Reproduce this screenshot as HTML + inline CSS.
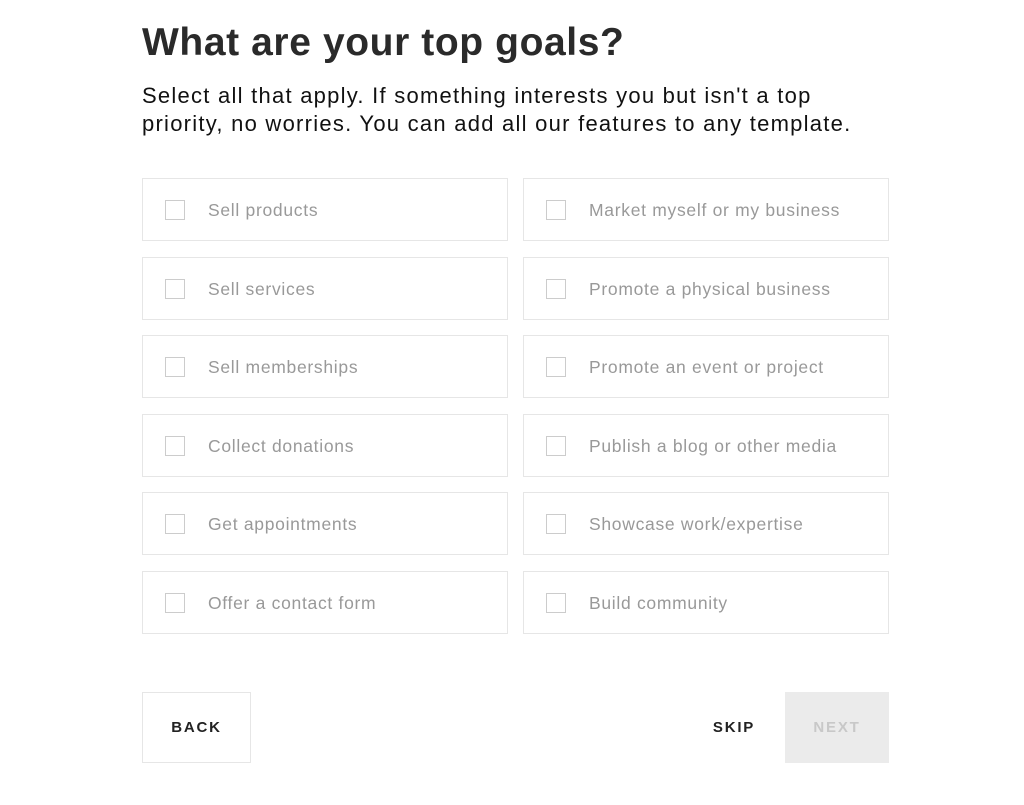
<!DOCTYPE html>
<html><head><meta charset="utf-8"><style>
body{margin:0;background:#fff;font-family:"Liberation Sans",sans-serif;width:1024px;height:805px;position:relative;overflow:hidden}
h1{position:absolute;left:142px;top:21px;margin:0;font-size:39px;font-weight:bold;color:#2a2a2a;letter-spacing:0.6px}
p{position:absolute;left:142px;top:82px;margin:0;font-size:22px;line-height:28px;color:#111;width:800px;letter-spacing:1.25px;white-space:nowrap}
.box{position:absolute;border:1px solid #e6e6e6;box-sizing:border-box;width:366px;height:63px}
.box i{position:absolute;left:22px;top:21px;width:20px;height:20px;border:1px solid #ccc;box-sizing:border-box}
.box span{position:absolute;left:65px;top:21px;font-size:17.5px;color:#999;letter-spacing:0.7px}
.btn{position:absolute;top:692px;height:71px;box-sizing:border-box;font-size:15px;font-weight:bold;letter-spacing:1.8px;display:flex;align-items:center;justify-content:center}
</style></head><body>
<h1>What are your top goals?</h1>
<p>Select all that apply. If something interests you but isn't a top<br>priority, no worries. You can add all our features to any template.</p>
<div class="box" style="left:142px;top:178px"><i></i><span>Sell products</span></div>
<div class="box" style="left:523px;top:178px"><i></i><span>Market myself or my business</span></div>
<div class="box" style="left:142px;top:257px"><i></i><span>Sell services</span></div>
<div class="box" style="left:523px;top:257px"><i></i><span>Promote a physical business</span></div>
<div class="box" style="left:142px;top:335px"><i></i><span>Sell memberships</span></div>
<div class="box" style="left:523px;top:335px"><i></i><span>Promote an event or project</span></div>
<div class="box" style="left:142px;top:414px"><i></i><span>Collect donations</span></div>
<div class="box" style="left:523px;top:414px"><i></i><span>Publish a blog or other media</span></div>
<div class="box" style="left:142px;top:492px"><i></i><span>Get appointments</span></div>
<div class="box" style="left:523px;top:492px"><i></i><span>Showcase work/expertise</span></div>
<div class="box" style="left:142px;top:571px"><i></i><span>Offer a contact form</span></div>
<div class="box" style="left:523px;top:571px"><i></i><span>Build community</span></div>
<div class="btn" style="left:142px;width:109px;border:1px solid #e6e6e6;color:#222">BACK</div>
<div class="btn" style="left:700px;width:68px;color:#222">SKIP</div>
<div class="btn" style="left:785px;width:104px;background:#ebebeb;color:#c8c8c8">NEXT</div>
</body></html>
